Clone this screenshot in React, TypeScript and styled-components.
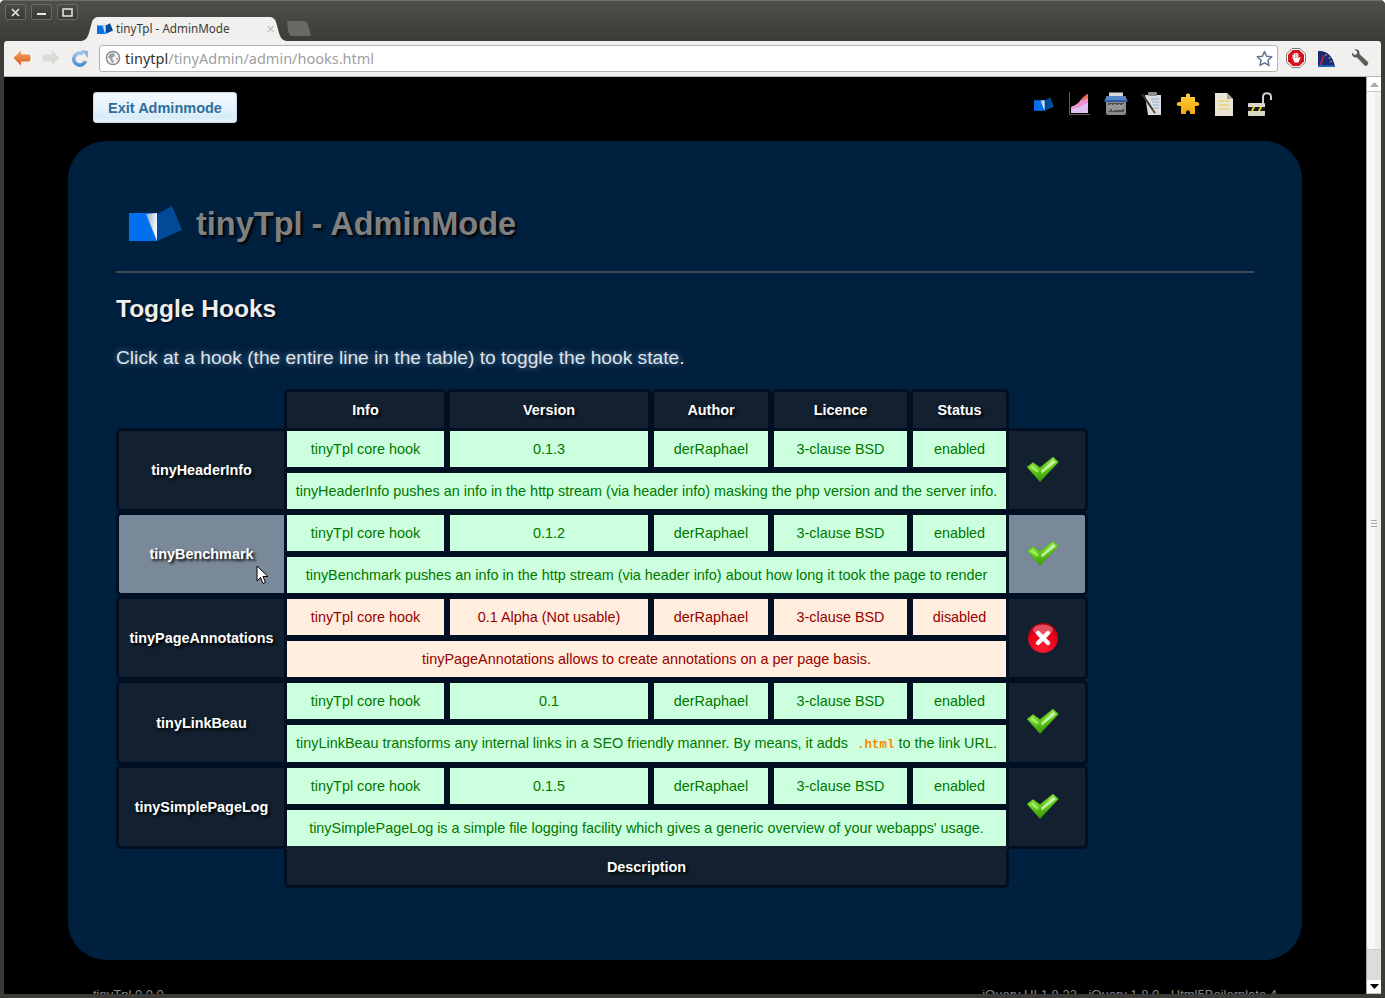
import React from "react";
import styled, { createGlobalStyle, css } from "styled-components";

const Global = createGlobalStyle`
  html, body { margin: 0; padding: 0; background: #fff; overflow: hidden; }
  body { font-family: "Liberation Sans", Arial, sans-serif; }
`;

const Frame = styled.div`
  width: 1385px; height: 998px; box-sizing: border-box;
  display: flex; flex-direction: column;
  background: #3c3b37; border-radius: 5px 5px 0 0; overflow: hidden;
  padding: 0 4px 4px 4px;
`;
const TitleBar = styled.div`
  height: 41px; flex: none; display: flex; margin: 0 -4px; padding-left: 5px;
  box-sizing: border-box;
  border-top: 1px solid #6f6e69;
  background: linear-gradient(#4f4e49, #3c3b37);
`;
const WinButtons = styled.div`
  display: flex; gap: 5px; padding-top: 3px; width: 75px; height: 16px;
`;
const WinButton = styled.div`
  width: 21px; height: 16px; border: 1px solid #6b6a65; border-radius: 2px; box-sizing: border-box;
  display: flex; align-items: center; justify-content: center;
  background: linear-gradient(#4a4944, #3a3935);
`;
const Tab = styled.div`
  width: 208px; height: 24px; margin-top: 16px; flex: none; box-sizing: border-box;
  background: #f1f0ee; display: flex; align-items: center; padding: 0 13px 2px 17px;
  clip-path: path("M0 24 C5 24 7 22 9 16 L12 5 C13 2 15 0 19 0 L189 0 C193 0 195 2 196 5 L199 16 C201 22 203 24 208 24 Z");
`;
const TabTitle = styled.span`
  font: 11.7px "Noto Sans", sans-serif; color: #3c3b37; margin-left: 3px; flex: 1; white-space: nowrap;
`;
const TabClose = styled.span`
  font: 15px "Liberation Sans", sans-serif; color: #bbb;
`;
const NewTab = styled.div`
  width: 25px; height: 15px; margin: 20px 0 0 -1px; background: #6a6964;
  clip-path: path("M0 0 L16 0 C19 0 20 1 21 4 L24 15 L5 15 C3 15 2 13 1 9 Z");
`;
const Toolbar = styled.div`
  height: 36px; flex: none; box-sizing: border-box; background: #f1f0ee;
  border-radius: 3px 3px 0 0; border-bottom: 1px solid #b8b7b3;
  display: flex; align-items: center; padding: 0 0 1px 9px;
`;
const NavIcon = styled.span<{ $w: number; $ml?: number }>`
  display: flex; width: ${p => p.$w}px; margin-left: ${p => p.$ml ?? 0}px; flex: none;
`;
const UrlBar = styled.div`
  width: 1179px; height: 27px; margin-left: 11px; box-sizing: border-box; flex: none;
  background: #fff; border: 1px solid #b4b3af; border-radius: 3px;
  display: flex; align-items: center; padding: 0 4px 0 5px;
  font: 14.5px "Noto Sans", sans-serif; color: #a0a0a0;
`;
const UrlText = styled.span`
  flex: 1; margin-left: 4px; white-space: nowrap;
`;
const UrlHost = styled.span`
  color: #333;
`;
const Viewport = styled.div`
  flex: 1; display: flex; min-height: 0;
`;
const Page = styled.main`
  flex: 1; background: #000; overflow: hidden; min-width: 0;
`;
const TopBar = styled.div`
  height: 64px; box-sizing: border-box; padding: 15px 94px 0 89px;
  display: flex; justify-content: space-between; align-items: flex-start;
`;
const ExitButton = styled.button`
  width: 144px; height: 31px; padding: 0; box-sizing: border-box;
  border: 1px solid #c5dbec; border-radius: 3px;
  background: linear-gradient(#f2f9fe 0%, #e6f2fc 55%, #d7ebf9 85%, #e8f3fc 100%);
  color: #2e6e9e; font: bold 14.5px "Liberation Sans", sans-serif;
`;
const ToolIcons = styled.div`
  display: flex; gap: 12px;
`;
const ToolIcon = styled.a`
  display: flex; width: 24px; height: 24px; align-items: center; justify-content: center;
`;
const Panel = styled.section`
  margin-left: 64px; width: 1234px; height: 819px; box-sizing: border-box;
  background: #00203f; border-radius: 38px; padding: 0 48px;
`;
const Brand = styled.div`
  height: 130px; box-sizing: border-box; padding: 64px 0 0 13px;
  display: flex; align-items: flex-start; gap: 14px;
`;
const Title = styled.h1`
  margin: 0; font: bold 32.5px/38px "Liberation Sans", sans-serif; color: #808080;
  text-shadow: 2px 2px 3px #000;
`;
const Rule = styled.hr`
  margin: 0; border: 0; height: 2px; background: #424a52;
`;
const Heading = styled.h2`
  margin: 21px 0 0; font: bold 24.5px/30px "Liberation Sans", sans-serif; color: #eee;
  text-shadow: 1px 1px 2px #000;
`;
const Lead = styled.p`
  margin: 22px 0 19px; font: 19.2px/24px "Liberation Sans", sans-serif; color: #dfe4ea;
  text-shadow: 0 0 6px rgba(190, 215, 240, 0.55);
`;
const Table = styled.table`
  border-collapse: separate; border-spacing: 0; table-layout: fixed; width: 972px;
  font: 14.4px "Liberation Sans", sans-serif;
`;
const borderColor = "#001022";
const cellBg = "#12202f";
const HeadCell = styled.th<{ $foot?: boolean }>`
  box-sizing: border-box; padding: 0; height: 39px;
  background: ${cellBg}; border: 3px solid ${borderColor};
  ${p => p.$foot
    ? css`border-top: 0; border-radius: 0 0 5px 5px;`
    : css`border-bottom: 0; border-radius: 5px 5px 0 0;`}
  color: #fff; font: bold 14.4px "Liberation Sans", sans-serif; text-align: center;
  text-shadow: 2px 2px 3px #000;
`;
const BlankCell = styled.td`
  padding: 0; border: 0;
`;
const NameCell = styled.th<{ $hover?: boolean }>`
  position: relative; padding: 0; box-sizing: border-box;
  background: ${p => (p.$hover ? "#7a8999" : cellBg)};
  border: 3px solid ${borderColor}; border-right: 0; border-radius: 5px 0 0 5px;
  color: #fff; font: bold 14.4px "Liberation Sans", sans-serif; text-align: center;
  text-shadow: 2px 2px 3px #000;
`;
const StateCell = styled.td<{ $hover?: boolean }>`
  padding: 0 0 0 18px; box-sizing: border-box; line-height: 0;
  background: ${p => (p.$hover ? "#7a8999" : cellBg)};
  border: 3px solid ${borderColor}; border-left: 0; border-radius: 0 5px 5px 0;
`;
const DataCell = styled.td<{ $off?: boolean; $tall?: boolean; $last?: boolean }>`
  height: ${p => (p.$tall ? 43 : 42)}px; box-sizing: border-box; padding: 0; text-align: center;
  border: 3px solid ${borderColor}; white-space: nowrap;
  ${p => p.$last && css`border-bottom-color: ${cellBg};`}
  ${p => p.$off
    ? css`background: #ffeedd; color: #990000;`
    : css`background: #ccffdd; color: #007700;`}
`;
const Code = styled.code`
  font: bold 12.5px "Liberation Mono", monospace; color: #ff8800; padding: 0 4px 0 5px;
`;
const Cursor = styled.svg`
  position: absolute; left: 137px; top: 50px;
`;
const CheckMark = styled.svg`
  margin-bottom: 2px;
`;
const Footer = styled.footer`
  display: flex; justify-content: space-between; margin-top: 27px; padding: 0 89px;
  font: 13px/16px "Liberation Sans", sans-serif; color: #8a8a8a;
`;
const Scrollbar = styled.div`
  width: 15px; flex: none; display: flex; flex-direction: column; box-sizing: border-box;
  border-left: 1px solid #a9a8a4; background: #dcdcdb;
`;
const ScrollButton = styled.div<{ $h: number }>`
  height: ${p => p.$h}px; flex: none; background: #fff; border-bottom: 1px solid #c8c8c6;
  box-sizing: border-box; display: flex; align-items: center; justify-content: center;
`;
const Thumb = styled.div`
  height: 858px; flex: none; box-sizing: border-box; padding-top: 428px;
  background: linear-gradient(90deg, #f8f8f7 0%, #f8f8f7 55%, #eeeeec 55%, #eeeeec 100%);
  border-bottom: 1px solid #c9c9c7;
  display: flex; flex-direction: column; align-items: center; gap: 2px;
`;
const Grip = styled.i`
  display: block; width: 6px; height: 1px; background: #a9a9a7;
`;
const Track = styled.div`
  flex: 1;
`;

const Logo = ({ w, h, id }: { w: number; h: number; id: string }) => (
  <svg width={w} height={h} viewBox="0 0 53 36">
    <defs>
      <linearGradient id={id} x1="0" y1="0" x2="1" y2="0.3">
        <stop offset="0" stopColor="#8fa9c8" />
        <stop offset="1" stopColor="#f4f7fa" />
      </linearGradient>
    </defs>
    <polygon points="28,9 43,1 53,25 28,36" fill="#004a98" />
    <rect x="0" y="8" width="28" height="28" fill="#0070f0" />
    <polygon points="17,9 28,8 28,36" fill={`url(#${id})`} />
  </svg>
);

const Check = ({ id }: { id: string }) => (
  <CheckMark width="32" height="25" viewBox="0 0 32 25">
    <defs>
      <linearGradient id={id} x1="0" y1="0" x2="0.3" y2="1">
        <stop offset="0" stopColor="#b4ee72" />
        <stop offset="0.5" stopColor="#66d01e" />
        <stop offset="1" stopColor="#39a008" />
      </linearGradient>
    </defs>
    <polygon points="0,10 6,5.5 13,10.5 26,0 31.5,5 13,24.5" fill={`url(#${id})`} stroke="#4a9a14" strokeWidth="0.6" strokeLinejoin="round" />
    <polygon points="14,14 26,3 29,5 15,16.5" fill="#dcf7c0" opacity="0.8" />
    <polygon points="3,10.5 6,8.5 12,14 10,15.5" fill="#b8f07c" opacity="0.75" />
  </CheckMark>
);

const Cross = () => (
  <svg width="32" height="32" viewBox="0 0 32 32">
    <defs>
      <radialGradient id="crossFill" cx="0.5" cy="0.85" r="0.85">
        <stop offset="0" stopColor="#ff2030" />
        <stop offset="0.6" stopColor="#e8001c" />
        <stop offset="1" stopColor="#a80010" />
      </radialGradient>
    </defs>
    <circle cx="16" cy="16" r="15" fill="url(#crossFill)" />
    <ellipse cx="16" cy="8" rx="10" ry="5.5" fill="#ff9aa5" opacity="0.5" />
    <path d="M11 11 L21 21 M21 11 L11 21" stroke="#fff" strokeWidth="4.4" strokeLinecap="round" />
  </svg>
);

const ChartIcon = () => (
  <svg width="24" height="24" viewBox="0 0 24 24">
    <path d="M1.5 0 V22.5 H22" fill="none" stroke="#5a5a5a" strokeWidth="1" />
    <path d="M3 21 V15 C8 13 10 12 13 8 C15 5 17 4 20 2 V21 Z" fill="#c9d8f7" />
    <path d="M3 15 C8 13 10 12 13 8 C15 5 17 4 20 2 V11 C16 12 13 16 8 16 C6 16 5 17 3 18 Z" fill="#f090d0" />
    <path d="M13 8 C15 5 17 4 20 2 V6 C17 7 15 9 13 8 Z" fill="#f26a4a" />
    <path d="M3 18 C5 17 7 17 8 17 C13 17 16 13 20 12 V21 H3 Z" fill="#dcc0f2" />
  </svg>
);
const ShredderIcon = () => (
  <svg width="24" height="24" viewBox="0 0 24 24">
    <rect x="2" y="8" width="20" height="15" rx="2" fill="#8a8a8a" />
    <path d="M4 11 h16 v9 H4 Z" fill="#505050" />
    <path d="M5 13 v6 M7 12 v5 M9 13 v6 M11 12 v6 M13 13 v5 M15 12 v6 M17 13 v5 M19 12 v5" stroke="#dcdcdc" strokeWidth="1" />
    <rect x="5" y="0.5" width="14" height="5" fill="#d8d8d8" />
    <path d="M2.5 4 H21.5 L23.5 9 H0.5 Z" fill="#5286c8" />
    <rect x="0.5" y="8" width="23" height="2" fill="#2e5c9c" />
    <circle cx="21" cy="6" r="1" fill="#e25050" />
  </svg>
);
const ClipboardIcon = () => (
  <svg width="24" height="24" viewBox="0 0 24 24">
    <path d="M5 3 H21 V23 H8 Z" fill="#d9dde0" />
    <rect x="8" y="0" width="9" height="4" rx="1" fill="#8a8d90" />
    <path d="M11 7 h8 M12 10 h7 M13 13 h6 M14 16 h5" stroke="#8fb0d0" strokeWidth="1" />
    <path d="M2 2 L15 21" stroke="#333" strokeWidth="2" />
    <path d="M12 17 L16 22 L14 18 Z" fill="#c09050" />
  </svg>
);
const PuzzleIcon = () => (
  <svg width="24" height="24" viewBox="0 0 24 24">
    <defs>
      <linearGradient id="puzzleFill" x1="0" y1="0" x2="0" y2="1">
        <stop offset="0" stopColor="#ffd23c" />
        <stop offset="1" stopColor="#f2a70e" />
      </linearGradient>
    </defs>
    <path d="M10 5 V3 C10 1 14 1 14 3 V5 H19 V10 H21 C24 10 24 14 21 14 H19 V22 H14 C15 17 9 17 10 22 H5 V14 H3 C0 14 0 10 3 10 H5 V5 Z" fill="url(#puzzleFill)" />
  </svg>
);
const DocIcon = () => (
  <svg width="24" height="24" viewBox="0 0 24 24">
    <path d="M3 1 H15 L21 7 V24 H3 Z" fill="#e9e6d8" />
    <path d="M15 1 L21 7 H15 Z" fill="#a9a596" />
    <path d="M6 9 H18 M6 13 H18 M6 17 H18" stroke="#ead47a" strokeWidth="1.6" />
  </svg>
);
const LockIcon = () => (
  <svg width="24" height="24" viewBox="0 0 24 24">
    <path d="M15 11 V5 C15 0 23 0 23 5 V8" fill="none" stroke="#d0d0d0" strokeWidth="2" />
    <rect x="0" y="11" width="17" height="13" rx="1" fill="#d8d8c4" />
    <rect x="0" y="15" width="17" height="4" fill="#1c1c1c" />
    <path d="M3 19 L5 15 H7 L5 19 Z M10 19 L12 15 H14 L12 19 Z" fill="#eedd10" />
  </svg>
);

const Cell = ({ off, children }: { off: boolean; children: React.ReactNode }) => (
  <DataCell $off={off}>{children}</DataCell>
);

type Hook = {
  name: string; version: string; off?: boolean; hover?: boolean; tall?: boolean; last?: boolean; desc: React.ReactNode;
};

const hooks: Hook[] = [
  { name: "tinyHeaderInfo", version: "0.1.3", desc: "tinyHeaderInfo pushes an info in the http stream (via header info) masking the php version and the server info." },
  { name: "tinyBenchmark", version: "0.1.2", hover: true, desc: "tinyBenchmark pushes an info in the http stream (via header info) about how long it took the page to render" },
  { name: "tinyPageAnnotations", version: "0.1 Alpha (Not usable)", off: true, desc: "tinyPageAnnotations allows to create annotations on a per page basis." },
  { name: "tinyLinkBeau", version: "0.1", tall: true, desc: <>tinyLinkBeau transforms any internal links in a SEO friendly manner. By means, it adds <Code>.html</Code>to the link URL.</> },
  { name: "tinySimplePageLog", version: "0.1.5", last: true, desc: "tinySimplePageLog is a simple file logging facility which gives a generic overview of your webapps' usage." },
];

export default function App() {
  return (
    <Frame>
      <Global />
      <TitleBar>
        <WinButtons>
          <WinButton><svg width="11" height="11" viewBox="0 0 11 11"><path d="M2 2 L9 9 M9 2 L2 9" stroke="#e8e8e4" strokeWidth="1.6" /></svg></WinButton>
          <WinButton><svg width="11" height="11" viewBox="0 0 11 11"><path d="M1 7 H10" stroke="#e8e8e4" strokeWidth="2" /></svg></WinButton>
          <WinButton><svg width="11" height="11" viewBox="0 0 11 11"><rect x="1" y="2" width="9" height="7" fill="none" stroke="#e8e8e4" strokeWidth="1.5" /></svg></WinButton>
        </WinButtons>
        <Tab>
          <Logo w={16} h={11} id="favLogo" />
          <TabTitle>tinyTpl - AdminMode</TabTitle>
          <TabClose>×</TabClose>
        </Tab>
        <NewTab />
      </TitleBar>
      <Toolbar>
        <NavIcon $w={18}>
          <svg width="18" height="16" viewBox="0 0 18 16">
            <defs>
              <linearGradient id="back" x1="0" y1="0" x2="0" y2="1"><stop offset="0" stopColor="#f2a468" /><stop offset="1" stopColor="#d85f1e" /></linearGradient>
            </defs>
            <path d="M8 0.5 L0.5 8 L8 15.5 V11.5 H16 C18 11.5 18 4.5 16 4.5 H8 Z" fill="url(#back)" />
          </svg>
        </NavIcon>
        <NavIcon $w={18} $ml={11}>
          <svg width="18" height="16" viewBox="0 0 18 16"><path d="M10 0.5 L17.5 8 L10 15.5 V11.5 H2 C0 11.5 0 4.5 2 4.5 H10 Z" fill="#dcdbd8" /></svg>
        </NavIcon>
        <NavIcon $w={16} $ml={12}>
          <svg width="16" height="17" viewBox="0 0 16 17">
            <defs>
              <linearGradient id="reload" x1="0" y1="0" x2="0" y2="1"><stop offset="0" stopColor="#9cc4ea" /><stop offset="1" stopColor="#4f8fd0" /></linearGradient>
            </defs>
            <path d="M13.5 11 A6 6 0 1 1 11 4" fill="none" stroke="url(#reload)" strokeWidth="3.6" />
            <path d="M9 0 L16 1 V8 Z" fill="#8ab8e4" />
          </svg>
        </NavIcon>
        <UrlBar>
          <svg width="16" height="16" viewBox="0 0 16 16">
            <circle cx="8" cy="8" r="6.6" fill="#f4f4f4" stroke="#8d8d8d" strokeWidth="1.5" />
            <path d="M5 4 L9 3 L10 6 L7 8 L9 12 L7 13 L5 9 L3 7 Z M11 8 L13 8 L12 11 Z" fill="#a0a0a0" />
          </svg>
          <UrlText><UrlHost>tinytpl</UrlHost>/tinyAdmin/admin/hooks.html</UrlText>
          <svg width="17" height="17" viewBox="0 0 17 17">
            <path d="M8.5 1.5 L10.6 6.3 L15.8 6.8 L11.9 10.3 L13 15.4 L8.5 12.8 L4 15.4 L5.1 10.3 L1.2 6.8 L6.4 6.3 Z" fill="#fff" stroke="#5f7596" strokeWidth="1.5" strokeLinejoin="round" />
          </svg>
        </UrlBar>
        <NavIcon $w={20} $ml={8}>
          <svg width="20" height="20" viewBox="0 0 20 20">
            <polygon points="6,0.5 14,0.5 19.5,6 19.5,14 14,19.5 6,19.5 0.5,14 0.5,6" fill="#fff" stroke="#777" />
            <polygon points="6.7,2 13.3,2 18,6.7 18,13.3 13.3,18 6.7,18 2,13.3 2,6.7" fill="#d8101c" />
            <path d="M6.5 10 V6.5 H7.7 V10 H8 V5.3 H9.2 V10 H9.6 V4.8 H10.8 V10 H11.2 V5.5 H12.4 V10.5 L13.6 9 L14.6 9.6 L12.5 14.5 H8.5 Z" fill="#fff" />
          </svg>
        </NavIcon>
        <NavIcon $w={17} $ml={12}>
          <svg width="17" height="17" viewBox="0 0 17 17">
            <path d="M0 17 V1 C8 0 15 5 17 17 Z" fill="#1a2c6e" />
            <path d="M2 16 L6 5" stroke="#e02030" strokeWidth="1.4" />
            <path d="M8 4 L8 6 M12 7 L11 9 M14 11 L12 12" stroke="#9fb0d8" strokeWidth="1" />
            <path d="M0 15 H17 V17 H0 Z" fill="#1c62b8" />
          </svg>
        </NavIcon>
        <NavIcon $w={18} $ml={16}>
          <svg width="18" height="18" viewBox="0 0 18 18">
            <path d="M1 3.5 L3.5 6 L6 5 L6 2.5 L3.5 0.5 C7 -0.3 9 2 8.4 5 L17 13 C18 15 15.5 18 13.5 16.5 L6 8.6 C3 9.2 0.3 7 1 3.5 Z" fill="#5d5d5a" />
          </svg>
        </NavIcon>
      </Toolbar>
      <Viewport>
        <Page>
          <TopBar>
            <ExitButton>Exit Adminmode</ExitButton>
            <ToolIcons>
              <ToolIcon><Logo w={20} h={14} id="toolLogo" /></ToolIcon>
              <ToolIcon><ChartIcon /></ToolIcon>
              <ToolIcon><ShredderIcon /></ToolIcon>
              <ToolIcon><ClipboardIcon /></ToolIcon>
              <ToolIcon><PuzzleIcon /></ToolIcon>
              <ToolIcon><DocIcon /></ToolIcon>
              <ToolIcon><LockIcon /></ToolIcon>
            </ToolIcons>
          </TopBar>
          <Panel>
            <Brand>
              <Logo w={53} h={36} id="mainLogo" />
              <Title>tinyTpl - AdminMode</Title>
            </Brand>
            <Rule />
            <Heading>Toggle Hooks</Heading>
            <Lead>Click at a hook (the entire line in the table) to toggle the hook state.</Lead>
            <Table>
              <colgroup>
                <col style={{ width: 168 }} />
                <col style={{ width: 163 }} />
                <col style={{ width: 204 }} />
                <col style={{ width: 120 }} />
                <col style={{ width: 139 }} />
                <col style={{ width: 99 }} />
                <col style={{ width: 79 }} />
              </colgroup>
              <thead>
                <tr>
                  <BlankCell />
                  {["Info", "Version", "Author", "Licence", "Status"].map(h => <HeadCell key={h}>{h}</HeadCell>)}
                  <BlankCell />
                </tr>
              </thead>
              <tbody>
                {hooks.map(hook => {
                  const off = !!hook.off;
                  return (
                    <React.Fragment key={hook.name}>
                      <tr>
                        <NameCell rowSpan={2} $hover={hook.hover}>
                          {hook.name}
                          {hook.hover && (
                            <Cursor width="14" height="20" viewBox="0 0 14 20">
                              <path d="M1 1 V16 L4.5 12.5 L7 18.5 L9.5 17.5 L7 11.5 H12 Z" fill="#fff" stroke="#000" strokeWidth="1" />
                            </Cursor>
                          )}
                        </NameCell>
                        <Cell off={off}>tinyTpl core hook</Cell>
                        <Cell off={off}>{hook.version}</Cell>
                        <Cell off={off}>derRaphael</Cell>
                        <Cell off={off}>3-clause BSD</Cell>
                        <Cell off={off}>{off ? "disabled" : "enabled"}</Cell>
                        <StateCell rowSpan={2} $hover={hook.hover}>
                          {off ? <Cross /> : <Check id={`check-${hook.name}`} />}
                        </StateCell>
                      </tr>
                      <tr>
                        <DataCell colSpan={5} $off={off} $tall={hook.tall} $last={hook.last}>{hook.desc}</DataCell>
                      </tr>
                    </React.Fragment>
                  );
                })}
              </tbody>
              <tfoot>
                <tr>
                  <BlankCell />
                  <HeadCell colSpan={5} $foot>Description</HeadCell>
                  <BlankCell />
                </tr>
              </tfoot>
            </Table>
          </Panel>
          <Footer>
            <span>tinyTpl 0.0.0</span>
            <span>jQuery UI 1.8.23 - jQuery 1.8.0 - Html5Boilerplate 4</span>
          </Footer>
        </Page>
        <Scrollbar>
          <ScrollButton $h={15}><svg width="9" height="5" viewBox="0 0 9 5"><polygon points="4.5,0 9,5 0,5" fill="#a9a9a7" /></svg></ScrollButton>
          <Thumb><Grip /><Grip /><Grip /></Thumb>
          <Track />
          <ScrollButton $h={14}><svg width="9" height="5" viewBox="0 0 9 5"><polygon points="0,0 9,0 4.5,5" fill="#000" /></svg></ScrollButton>
        </Scrollbar>
      </Viewport>
    </Frame>
  );
}
